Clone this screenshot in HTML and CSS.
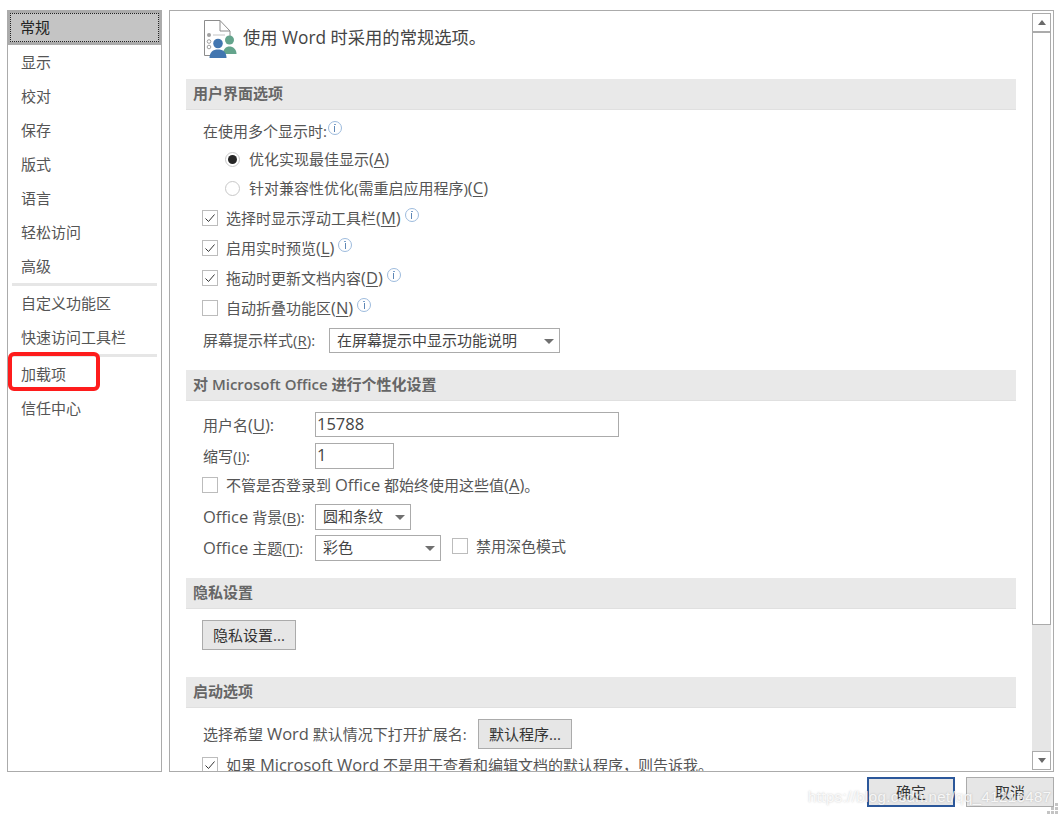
FILE: index.html
```html
<!DOCTYPE html>
<html lang="zh-CN">
<head>
<meta charset="utf-8">
<title>Word 选项</title>
<link rel="stylesheet" href="styles.css">
</head>
<body>
<div class="main">
  <nav class="nav">
    <div class="nav-item selected"><span class="focus">常规</span></div>
    <div class="nav-item">显示</div>
    <div class="nav-item">校对</div>
    <div class="nav-item">保存</div>
    <div class="nav-item">版式</div>
    <div class="nav-item">语言</div>
    <div class="nav-item">轻松访问</div>
    <div class="nav-item">高级</div>
    <div class="nav-sep"></div>
    <div class="nav-item">自定义功能区</div>
    <div class="nav-item">快速访问工具栏</div>
    <div class="nav-sep"></div>
    <div class="nav-item">加载项</div>
    <div class="nav-item">信任中心</div>
    <div class="marker"></div>
  </nav>
  <section class="panel">
    <div class="content">
      <div class="title-row">
        <svg class="title-icon" width="36" height="38" viewBox="0 0 36 38">
          <path d="M1.500 0.500H17L27 11V22M17 0.500V11H27M1.500 0.500V35.500H9" fill="none" stroke="#8c8c8c" stroke-width="1"/>
          <circle cx="6" cy="15" r="2" fill="#a0a0a0"/>
          <path d="M10 15H22" stroke="#c4c4c4"/>
          <circle cx="6" cy="21.500" r="1.800" fill="none" stroke="#a0a0a0"/>
          <circle cx="6" cy="27" r="1.800" fill="none" stroke="#a0a0a0"/>
          <circle cx="26.500" cy="20" r="4.500" fill="#64a48c"/>
          <path d="M20 34c0-5 3-7.500 6.500-7.500S33.500 29 33.500 34z" fill="#64a48c"/>
          <circle cx="15" cy="23.500" r="4.800" fill="#4276b0"/>
          <path d="M6.500 38c0-6 3.500-8.500 8.500-8.500s8.500 2.500 8.500 8.500z" fill="#4276b0"/>
        </svg>
        <span class="title-text">使用 Word 时采用的常规选项。</span>
      </div>

      <h2 class="section">用户界面选项</h2>
      <div class="row label-row">在使用多个显示时:<i class="info"></i></div>
      <div class="row radio-row first">
        <span class="radio on"></span><span>优化实现最佳显示<span class="lat">(<u>A</u>)</span></span>
      </div>
      <div class="row radio-row">
        <span class="radio"></span><span>针对兼容性优化(需重启应用程序)<span class="lat">(<u>C</u>)</span></span>
      </div>
      <div class="row check-row">
        <span class="check"><svg width="14" height="14" viewBox="0 0 14 14"><path d="M2.500 7.500L5.500 10.500L11.500 3.500" fill="none" stroke="#333" stroke-width="1"/></svg></span>
        <span>选择时显示浮动工具栏<span class="lat">(<u>M</u>)</span></span><i class="info raised"></i>
      </div>
      <div class="row check-row">
        <span class="check"><svg width="14" height="14" viewBox="0 0 14 14"><path d="M2.500 7.500L5.500 10.500L11.500 3.500" fill="none" stroke="#333" stroke-width="1"/></svg></span>
        <span>启用实时预览<span class="lat">(<u>L</u>)</span></span><i class="info raised"></i>
      </div>
      <div class="row check-row">
        <span class="check"><svg width="14" height="14" viewBox="0 0 14 14"><path d="M2.500 7.500L5.500 10.500L11.500 3.500" fill="none" stroke="#333" stroke-width="1"/></svg></span>
        <span>拖动时更新文档内容<span class="lat">(<u>D</u>)</span></span><i class="info raised"></i>
      </div>
      <div class="row check-row">
        <span class="check"></span>
        <span>自动折叠功能区<span class="lat">(<u>N</u>)</span></span><i class="info raised"></i>
      </div>
      <div class="row field-row tip-row">
        <span class="field-label tip-label">屏幕提示样式(<u>R</u>):</span>
        <span class="select tip-select">在屏幕提示中显示功能说明<b class="caret"></b></span>
      </div>

      <h2 class="section after-fields">对 Microsoft Office 进行个性化设置</h2>
      <div class="row field-row user-row">
        <span class="field-label">用户名<span class="lat">(<u>U</u>):</span></span>
        <span class="input user-input"><span class="lat">15788</span></span>
      </div>
      <div class="row field-row abbr-row">
        <span class="field-label">缩写(<u>I</u>):</span>
        <span class="input abbr-input"><span class="lat">1</span></span>
      </div>
      <div class="row check-row sync-check">
        <span class="check"></span>
        <span>不管是否登录到 <span class="lat">Office</span> 都始终使用这些值<span class="lat">(<u>A</u>)</span>。</span>
      </div>
      <div class="row field-row bg-row">
        <span class="field-label"><span class="lat">Office</span> 背景(<u>B</u>):</span>
        <span class="select bg-select">圆和条纹<b class="caret"></b></span>
      </div>
      <div class="row field-row theme-row">
        <span class="field-label"><span class="lat">Office</span> 主题(<u>T</u>):</span>
        <span class="select theme-select">彩色<b class="caret"></b></span>
        <span class="check dark-check"></span>
        <span class="dark-label">禁用深色模式</span>
      </div>

      <h2 class="section after-fields">隐私设置</h2>
      <div class="button-row"><span class="button privacy">隐私设置...</span></div>

      <h2 class="section after-button">启动选项</h2>
      <div class="row field-row default-row">
        <span class="default-label">选择希望 <span class="lat">Word</span> 默认情况下打开扩展名:</span>
        <span class="button default-btn">默认程序...</span>
      </div>
      <div class="row check-row last-check">
        <span class="check"><svg width="14" height="14" viewBox="0 0 14 14"><path d="M2.500 7.500L5.500 10.500L11.500 3.500" fill="none" stroke="#333" stroke-width="1"/></svg></span>
        <span>如果 <span class="lat">Microsoft Word</span> 不是用于查看和编辑文档的默认程序，则告诉我。</span>
      </div>
    </div>
    <div class="scrollbar">
      <div class="arrow"><b class="tri up"></b></div>
      <div class="thumb"></div>
      <div class="track"></div>
      <div class="arrow"><b class="tri down"></b></div>
    </div>
  </section>
</div>
<footer class="footer">
  <span class="dlg-btn default">确定</span>
  <span class="dlg-btn">取消</span>
</footer>
<div class="watermark">https://blog.csdn.net/qq_41216487</div>
<svg class="grip" width="12" height="12" viewBox="0 0 12 12">
  <path d="M8 0h3v3H8zM4 4h3v3H4zM8 4h3v3H8zM0 8h3v3H0zM4 8h3v3H4zM8 8h3v3H8z" fill="#c4c4c4"/>
</svg>
</body>
</html>
```
FILE: styles.css
```css
* { box-sizing: border-box; }
html, body { margin: 0; height: 100%; }
body {
  position: relative;
  width: 1061px;
  height: 817px;
  overflow: hidden;
  padding: 10px 7px 0;
  background: #fff;
  color: #555;
  font: 15px/20px "Open Sans", "Noto Sans CJK SC", sans-serif;
}
u { text-underline-offset: 2px; }
.lat { font-size: 16.500px; line-height: 1; }

.main { display: flex; gap: 7px; height: 762px; }

.nav {
  position: relative;
  width: 155px;
  border: 1px solid #ababab;
  flex: none;
}
.nav-item {
  height: 34px;
  padding: 1px 0 0 13px;
  line-height: 32px;
}
.nav-item.selected {
  height: 35px;
  margin: -1px -1px 0;
  background: #c4c4c4;
  border: 3px solid #ababab;
  padding: 0;
  color: #222;
}
.focus {
  display: block;
  height: 100%;
  padding-left: 9px;
  line-height: 27px;
  border: 1px dotted #222;
}
.nav-sep {
  height: 3px;
  margin: 0 4px;
  background: #e6e6e6;
}
.marker {
  position: absolute;
  left: 0;
  top: 341px;
  width: 92px;
  height: 39px;
  border: 4px solid #fe1c1c;
  border-radius: 6px;
}

.panel {
  flex: 1;
  display: flex;
  border: 1px solid #ababab;
  padding-right: 1px;
  min-width: 0;
}
.content {
  flex: 1;
  overflow: hidden;
  padding-left: 16px;
}
.title-row {
  display: flex;
  height: 68px;
  padding-left: 17px;
}
.title-icon { margin-top: 9px; flex: none; }
.title-text {
  margin: 16px 0 0 4px;
  font-size: 17.300px;
  line-height: 22px;
  color: #444;
}
.section {
  width: 830px;
  height: 31px;
  margin: 0;
  padding-left: 7px;
  font-size: 15px;
  line-height: 28px;
  font-weight: 600;
  color: #666;
  background: #e9e9e9;
  border-bottom: 1px solid #e0e0e0;
}
.section.after-fields { margin-top: 17px; }
.section.after-button { margin-top: 27px; }

.row { display: flex; align-items: center; padding-left: 16px; }
.label-row { height: 28px; margin-top: 7px; padding-left: 17px; }
.radio-row { height: 30px; padding-left: 39px; gap: 9px; }
.radio-row.first { height: 28px; }
.check-row { height: 30px; gap: 8px; }
.sync-check, .last-check { margin-top: 1px; }
.field-row { gap: 0; padding-left: 17px; }

.radio {
  width: 15px;
  height: 15px;
  border: 1px solid #c8c8c8;
  border-radius: 50%;
  background: #fff;
  flex: none;
  display: flex;
  align-items: center;
  justify-content: center;
}
.radio.on::after {
  content: "";
  width: 9px;
  height: 9px;
  border-radius: 50%;
  background: #262626;
}
.check {
  width: 16px;
  height: 16px;
  border: 1px solid #bcbcbc;
  background: #fff;
  flex: none;
  display: flex;
  align-items: center;
  justify-content: center;
}
.info {
  width: 14px;
  height: 14px;
  margin-left: 1px;
  margin-top: -6px;
  border: 1px solid #9dbbdd;
  border-radius: 50%;
  flex: none;
  position: relative;
}
.info::before {
  content: "";
  position: absolute;
  left: 5px;
  top: 2px;
  width: 2px;
  height: 1px;
  background: #7fa3cc;
}
.info::after {
  content: "";
  position: absolute;
  left: 5.500px;
  top: 4px;
  width: 1px;
  height: 6px;
  background: #5f87b5;
}
.info.raised { margin-left: -4px; }

.field-label { width: 112px; flex: none; }
.tip-label { width: 126px; margin-top: -2px; }
.tip-row { height: 25px; margin-top: 5px; }
.select, .input {
  position: relative;
  display: block;
  height: 100%;
  border: 1px solid #ababab;
  background: #fff;
  color: #444;
  line-height: 23px;
  padding-left: 7px;
  flex: none;
}
.input { padding-left: 1px; }
.tip-select { width: 231px; }
.caret {
  position: absolute;
  right: 5px;
  top: 10px;
  border: 5px solid transparent;
  border-top: 5px solid #707070;
  border-bottom: 0;
}
.user-row { height: 25px; margin-top: 11px; }
.user-input { width: 304px; }
.abbr-row { height: 26px; margin-top: 6px; }
.abbr-input { width: 79px; }
.bg-row { height: 26px; margin-top: 4px; }
.bg-select { width: 96px; }
.theme-row { height: 26px; margin-top: 5px; }
.theme-select { width: 126px; }
.dark-check { margin: 0 8px 4px 11px; }
.dark-label { margin-bottom: 4px; }

.button-row { padding-left: 16px; margin-top: 11px; line-height: 0; }
.button {
  display: inline-block;
  height: 30px;
  border: 1px solid #ababab;
  background: #e6e6e6;
  color: #333;
  line-height: 28px;
  text-align: center;
  font-size: 15px;
}
.privacy { width: 94px; }
.default-row { height: 30px; margin-top: 11px; }
.default-label { width: 275px; flex: none; }
.default-btn { width: 94px; }

.scrollbar {
  width: 19px;
  flex: none;
  margin: 2px 1px 1px 0;
  display: flex;
  flex-direction: column;
  background: #e6e6e6;
}
.arrow {
  height: 19px;
  border: 1px solid #ababab;
  background: #fff;
  display: flex;
  align-items: center;
  justify-content: center;
  flex: none;
}
.thumb {
  height: 593px;
  border: 1px solid #ababab;
  background: #fff;
  flex: none;
}
.track { flex: 1; }
.tri { border: 4.500px solid transparent; }
.tri.up { border-bottom: 5px solid #6a6a6a; border-top: 0; }
.tri.down { border-top: 5px solid #6a6a6a; border-bottom: 0; }

.footer {
  display: flex;
  justify-content: flex-end;
  gap: 11px;
  margin-top: 5px;
}
.dlg-btn {
  width: 88px;
  height: 30px;
  border: 1px solid #ababab;
  background: #e6e6e6;
  color: #333;
  text-align: center;
  line-height: 28px;
}
.dlg-btn.default { border: 2px solid #2b579a; line-height: 26px; }

.watermark {
  position: absolute;
  left: 808px;
  top: 787px;
  font: 15px/20px "Liberation Sans", sans-serif;
  letter-spacing: 0.400px;
  color: rgba(255, 255, 255, 0.85);
  text-shadow: 0 0 2px rgba(120, 120, 120, 0.45);
  white-space: nowrap;
}
.grip {
  position: absolute;
  left: 1047px;
  top: 803px;
}
```
